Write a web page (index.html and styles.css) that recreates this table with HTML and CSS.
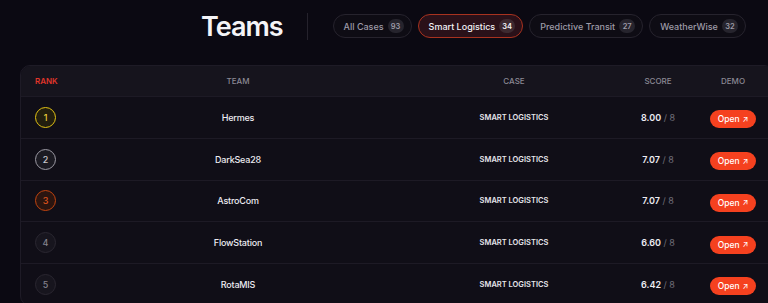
FILE: index.html
```html
<!DOCTYPE html>
<html lang="en">

<head>
  <meta charset="UTF-8">
  <meta name="viewport" content="width=device-width, initial-scale=1.0">
  <title>Teams</title>
  <link rel="stylesheet" href="styles.css">
</head>

<body>
  <header class="page-head">
    <h1>Teams</h1>
    <div class="divider"></div>
    <div class="filters">
      <a href="#" class="pill">All Cases <span class="count">93</span></a>
      <a href="#" class="pill active">Smart Logistics <span class="count">34</span></a>
      <a href="#" class="pill">Predictive Transit <span class="count">27</span></a>
      <a href="#" class="pill">WeatherWise <span class="count">32</span></a>
    </div>
  </header>

  <div class="board">
    <div class="row head">
      <div class="rank-col rank-title">Rank</div>
      <div class="center">Team</div>
      <div class="center">Case</div>
      <div class="center">Score</div>
      <div class="center">Demo</div>
    </div>

    <div class="row">
      <div class="rank-col"><span class="rank gold">1</span></div>
      <div class="center team">Hermes</div>
      <div class="center case">Smart Logistics</div>
      <div class="center score"><b>8.00</b> / 8</div>
      <div class="center"><a href="#" class="open-btn">Open <span class="arrow">&#8599;</span></a></div>
    </div>

    <div class="row">
      <div class="rank-col"><span class="rank silver">2</span></div>
      <div class="center team">DarkSea28</div>
      <div class="center case">Smart Logistics</div>
      <div class="center score"><b>7.07</b> / 8</div>
      <div class="center"><a href="#" class="open-btn">Open <span class="arrow">&#8599;</span></a></div>
    </div>

    <div class="row">
      <div class="rank-col"><span class="rank bronze">3</span></div>
      <div class="center team">AstroCom</div>
      <div class="center case">Smart Logistics</div>
      <div class="center score"><b>7.07</b> / 8</div>
      <div class="center"><a href="#" class="open-btn">Open <span class="arrow">&#8599;</span></a></div>
    </div>

    <div class="row">
      <div class="rank-col"><span class="rank">4</span></div>
      <div class="center team">FlowStation</div>
      <div class="center case">Smart Logistics</div>
      <div class="center score"><b>6.60</b> / 8</div>
      <div class="center"><a href="#" class="open-btn">Open <span class="arrow">&#8599;</span></a></div>
    </div>

    <div class="row">
      <div class="rank-col"><span class="rank">5</span></div>
      <div class="center team">RotaMIS</div>
      <div class="center case">Smart Logistics</div>
      <div class="center score"><b>6.42</b> / 8</div>
      <div class="center"><a href="#" class="open-btn">Open <span class="arrow">&#8599;</span></a></div>
    </div>
  </div>
</body>

</html>
```

FILE: styles.css
```css
body {
  font-family: 'Inter', 'Liberation Sans', sans-serif;
  margin: 0;
  padding: 0;
  background-color: #0b0912;
  color: #e8e7ee;
  overflow: hidden;
}

.page-head {
  display: flex;
  align-items: center;
  height: 52px;
  padding-left: 201px;
}

h1 {
  margin: 0;
  font-size: 27px;
  font-weight: 600;
  letter-spacing: -1px;
  color: #f4f4f7;
}

.divider {
  width: 1px;
  height: 27px;
  background-color: #25222c;
  margin: 0 25px 0 24px;
}

.filters {
  display: flex;
  gap: 6px;
}

.pill {
  display: flex;
  flex-shrink: 0;
  align-items: center;
  gap: 4px;
  height: 22px;
  padding: 0 7px 0 10px;
  border: 1px solid #26232d;
  border-radius: 13px;
  background-color: #0e0c14;
  color: #9d9ba7;
  font-size: 9px;
  font-weight: 500;
  white-space: nowrap;
  text-decoration: none;
}

.pill .count {
  display: inline-flex;
  align-items: center;
  justify-content: center;
  min-width: 14px;
  height: 14px;
  padding: 0 1px;
  border-radius: 7px;
  background-color: #26242d;
  color: #9d9ba7;
  font-size: 7.5px;
  font-weight: 600;
}

.pill.active {
  background-color: #2a1119;
  border-color: #a8321f;
  color: #f2f1f5;
}

.pill.active .count {
  background-color: #3d2a30;
  color: #f2f1f5;
}

.board {
  width: 752px;
  margin: 12.5px 0 0 20px;
  border: 1px solid #1e1b26;
  border-radius: 10px;
  background-color: #100e17;
  overflow: hidden;
}

.row {
  display: grid;
  grid-template-columns: 50px 334px 218px 70px 80px;
  align-items: center;
  height: 40.75px;
  border-top: 1px solid #1d1a25;
}

.row.head {
  height: 30.5px;
  border-top: none;
  background-color: #16141d;
  color: #8b8994;
  font-size: 8px;
  font-weight: 500;
  text-transform: uppercase;
}

.rank-col {
  padding-left: 14px;
}

.rank-title {
  color: #e0362b;
  font-weight: 600;
}

.center {
  text-align: center;
}

.rank {
  display: flex;
  align-items: center;
  justify-content: center;
  width: 19px;
  height: 19px;
  border: 1.5px solid #2a2731;
  border-radius: 50%;
  background-color: #17151e;
  color: #84828d;
  font-size: 9px;
  font-weight: 500;
}

.rank.gold {
  border-color: #e2c214;
  background-color: #221e0e;
  color: #e9cb3a;
}

.rank.silver {
  border-color: #9b99a3;
  background-color: #1b1a22;
  color: #c9c8cf;
}

.rank.bronze {
  border-color: #c2440f;
  background-color: #2b1510;
  color: #e0561e;
}

.team {
  font-size: 9px;
  font-weight: 500;
  letter-spacing: -0.2px;
  color: #ecebf1;
}

.case {
  font-size: 7.5px;
  font-weight: 600;
  text-transform: uppercase;
  color: #e6e5eb;
}

.score {
  font-size: 9px;
  color: #6f6d78;
}

.score b {
  color: #ecebf1;
  font-weight: 600;
}

.open-btn {
  display: inline-flex;
  align-items: center;
  gap: 3px;
  height: 18px;
  padding: 0 8px;
  border-radius: 9px;
  background-color: #f5411f;
  color: #ffffff;
  font-size: 8.5px;
  font-weight: 500;
  text-decoration: none;
}

.open-btn .arrow {
  font-size: 7.5px;
}
```
